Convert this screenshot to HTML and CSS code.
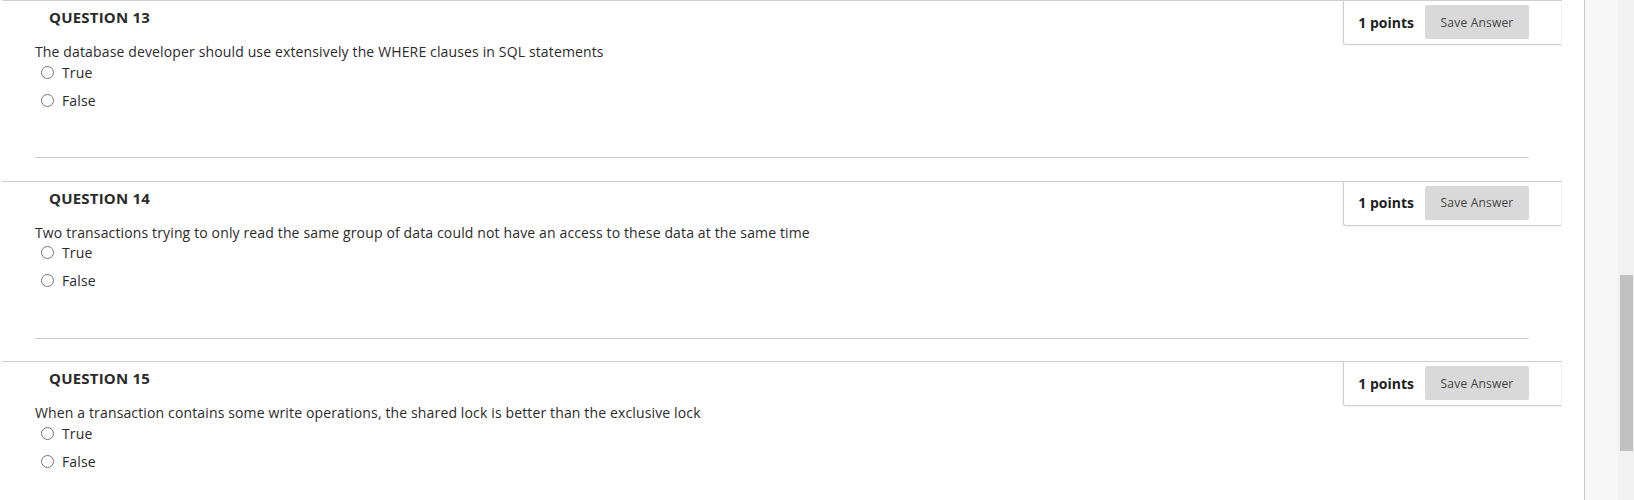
FILE: index.html
```html
<!DOCTYPE html>
<html lang="en">
<head>
    <meta charset="UTF-8">
    <meta name="viewport" content="width=device-width, initial-scale=1.0">
    <title>Test</title>
    <link rel="stylesheet" href="styles.css">
</head>
<body>
    <div class="page">
        <main class="content">
            <div class="question">
                <div class="question-header">
                    <h3>QUESTION 13</h3>
                    <div class="points-box">
                        <span class="points">1 points</span>
                        <button class="save-button">Save Answer</button>
                    </div>
                </div>
                <p class="question-text">The database developer should use extensively the WHERE clauses in SQL statements</p>
                <ul class="answers">
                    <li><input type="radio" name="q13" id="q13t"><label for="q13t">True</label></li>
                    <li><input type="radio" name="q13" id="q13f"><label for="q13f">False</label></li>
                </ul>
                <hr>
            </div>
            <div class="question">
                <div class="question-header">
                    <h3>QUESTION 14</h3>
                    <div class="points-box">
                        <span class="points">1 points</span>
                        <button class="save-button">Save Answer</button>
                    </div>
                </div>
                <p class="question-text">Two transactions trying to only read the same group of data could not have an access to these data at the same time</p>
                <ul class="answers">
                    <li><input type="radio" name="q14" id="q14t"><label for="q14t">True</label></li>
                    <li><input type="radio" name="q14" id="q14f"><label for="q14f">False</label></li>
                </ul>
                <hr>
            </div>
            <div class="question">
                <div class="question-header">
                    <h3>QUESTION 15</h3>
                    <div class="points-box">
                        <span class="points">1 points</span>
                        <button class="save-button">Save Answer</button>
                    </div>
                </div>
                <p class="question-text">When a transaction contains some write operations, the shared lock is better than the exclusive lock</p>
                <ul class="answers">
                    <li><input type="radio" name="q15" id="q15t"><label for="q15t">True</label></li>
                    <li><input type="radio" name="q15" id="q15f"><label for="q15f">False</label></li>
                </ul>
                <hr>
            </div>
        </main>
        <div class="gutter"></div>
        <div class="scrollbar"><div class="thumb"></div></div>
    </div>
</body>
</html>
```
FILE: styles.css
```css
body {
    margin: 0;
    font-family: "Open Sans", Arial, sans-serif;
    color: #333;
    background: #fff;
}
.page {
    display: flex;
    height: 500px;
    overflow: hidden;
}
.content {
    width: 1584px;
    border-right: 1px solid #c8c8c8;
}
.gutter {
    width: 33px;
    background-color: #f7f7f7;
}
.scrollbar {
    width: 16px;
    background-color: #f1f1f1;
    padding: 275px 1px 0 2px;
    box-sizing: border-box;
}
.thumb {
    height: 176px;
    background-color: #c1c1c1;
}
.question {
    margin-left: 2px;
    width: 1560px;
    height: 180.5px;
    border-top: 1px solid #cfcfcf;
    box-sizing: border-box;
}
.question-header {
    display: flex;
    justify-content: space-between;
    align-items: flex-start;
}
.question-header h3 {
    margin: 6px 0 15px 47px;
    font-size: 15px;
    line-height: 20px;
    font-weight: 700;
    letter-spacing: 0.2px;
    color: #2b2b2b;
}
.points-box {
    display: flex;
    align-items: center;
    gap: 11px;
    padding: 4px 32px 5px 14px;
    margin-bottom: -3px;
    border-left: 1px solid #cfcfcf;
    border-bottom: 1px solid #cfcfcf;
    border-right: 1px solid #f0f0f0;
    border-bottom-left-radius: 3px;
    box-shadow: -1px 1px 2px rgba(0,0,0,0.05);
    background: #fff;
}
.points {
    font-size: 14px;
    font-weight: 700;
    line-height: 19px;
    color: #1f1f1f;
}
.save-button {
    width: 104px;
    height: 34px;
    border: none;
    border-radius: 2px;
    background-color: #d9d9d9;
    font-family: "Open Sans", Arial, sans-serif;
    font-size: 12px;
    letter-spacing: 0.2px;
    color: #444;
    padding: 0;
}
.question-text {
    margin: 0 0 0 33px;
    font-size: 14px;
    line-height: 19px;
    letter-spacing: 0.14px;
    color: #2b2b2b;
}
.answers {
    list-style: none;
    margin: 0;
    padding: 0 0 0 39px;
    display: flex;
    flex-direction: column;
    gap: 6px;
}
.answers li {
    display: flex;
    align-items: center;
    height: 22px;
    font-size: 14px;
    letter-spacing: 0.14px;
    color: #2b2b2b;
}
.answers input {
    width: 13px;
    height: 13px;
    margin: 0 8px 0 0;
}
hr {
    margin: 46px 0 0 33px;
    width: 1494px;
    border: none;
    border-top: 1px solid #cfcfcf;
    height: 0;
}
```
